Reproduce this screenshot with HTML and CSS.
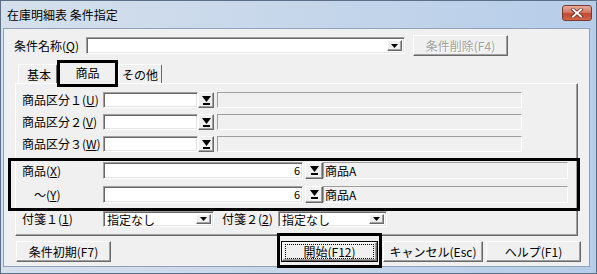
FILE: index.html
```html
<!DOCTYPE html>
<html lang="ja">
<head>
  <meta charset="UTF-8">
  <title>在庫明細表 条件指定</title>
  <link rel="stylesheet" href="styles.css">
</head>
<body>
  <div class="window">
    <div class="titlebar">
      <span class="title">在庫明細表 条件指定</span>
      <span class="close-btn">
        <svg width="14" height="10" viewBox="0 0 14 10">
          <path d="M3 1.5 L11 8.5 M11 1.5 L3 8.5" stroke="#5a2218" stroke-width="3.4" stroke-linecap="square"/>
          <path d="M3 1.5 L11 8.5 M11 1.5 L3 8.5" stroke="#fff" stroke-width="2" stroke-linecap="square"/>
        </svg>
      </span>
    </div>

    <div class="client">
      <div class="cond-row">
        <span class="lbl lbl-cond">条件名称(<u>Q</u>)</span>
        <div class="combo combo-cond">
          <span class="combo-text"></span>
          <span class="combo-arrow"><svg width="7" height="4" viewBox="0 0 7 4"><path d="M0 0h7L3.5 4z"/></svg></span>
        </div>
        <button class="btn btn-del" disabled>条件削除(F4)</button>
      </div>

      <div class="tabs">
        <div class="tab tab-basic">基本</div>
        <div class="tab tab-active">商品</div>
        <div class="tab tab-other">その他</div>
      </div>

      <div class="panel">
        <div class="row">
          <span class="lbl lbl-p">商品区分１(<u>U</u>)</span>
          <span class="field f-class"></span>
          <span class="pick"><svg width="9" height="9" viewBox="0 0 9 9"><path d="M0 0h9L4.5 6z"/><rect x="1" y="7" width="7" height="2"/></svg></span>
          <span class="static s-class"></span>
        </div>
        <div class="row">
          <span class="lbl lbl-p">商品区分２(<u>V</u>)</span>
          <span class="field f-class"></span>
          <span class="pick"><svg width="9" height="9" viewBox="0 0 9 9"><path d="M0 0h9L4.5 6z"/><rect x="1" y="7" width="7" height="2"/></svg></span>
          <span class="static s-class"></span>
        </div>
        <div class="row row-last">
          <span class="lbl lbl-p">商品区分３(<u>W</u>)</span>
          <span class="field f-class"></span>
          <span class="pick"><svg width="9" height="9" viewBox="0 0 9 9"><path d="M0 0h9L4.5 6z"/><rect x="1" y="7" width="7" height="2"/></svg></span>
          <span class="static s-class"></span>
        </div>

        <div class="row row-item">
          <span class="lbl lbl-p">商品(<u>X</u>)</span>
          <span class="field f-item">6</span>
          <span class="pick pick-item"><svg width="9" height="9" viewBox="0 0 9 9"><path d="M0 0h9L4.5 6z"/><rect x="1" y="7" width="7" height="2"/></svg></span>
          <span class="static s-item">商品A</span>
        </div>
        <div class="row row-item row-item-last">
          <span class="lbl lbl-p">　～(<u>Y</u>)</span>
          <span class="field f-item">6</span>
          <span class="pick pick-item"><svg width="9" height="9" viewBox="0 0 9 9"><path d="M0 0h9L4.5 6z"/><rect x="1" y="7" width="7" height="2"/></svg></span>
          <span class="static s-item">商品A</span>
        </div>

        <div class="row">
          <span class="lbl lbl-p">付箋１(<u>1</u>)</span>
          <div class="combo combo-tag1">
            <span class="combo-text">指定なし</span>
            <span class="combo-arrow"><svg width="7" height="4" viewBox="0 0 7 4"><path d="M0 0h7L3.5 4z"/></svg></span>
          </div>
          <span class="lbl lbl-tag2">付箋２(<u>2</u>)</span>
          <div class="combo combo-tag2">
            <span class="combo-text">指定なし</span>
            <span class="combo-arrow"><svg width="7" height="4" viewBox="0 0 7 4"><path d="M0 0h7L3.5 4z"/></svg></span>
          </div>
        </div>
      </div>

      <div class="footer">
        <button class="btn btn-init">条件初期(F7)</button>
        <div class="footer-right">
          <span class="default-frame"><button class="btn btn-start"><span class="focus">開始(F12)</span></button></span>
          <button class="btn btn-cancel">キャンセル(Esc)</button>
          <button class="btn btn-help">ヘルプ(F1)</button>
        </div>
      </div>

      <div class="mark mark-tab"></div>
      <div class="mark mark-items"></div>
      <div class="mark mark-start"></div>
    </div>
  </div>
</body>
</html>
```

FILE: styles.css
```css
* {
  box-sizing: border-box;
}

body {
  margin: 0;
  font-family: "Noto Sans CJK JP", "Liberation Sans", sans-serif;
  font-size: 12px;
  color: #000;
  background: #fff;
}

u {
  text-decoration: underline;
  text-underline-offset: 1px;
}

.window {
  width: 597px;
  height: 274px;
  display: flex;
  flex-direction: column;
  border: 1px solid #5c6f88;
  padding: 0 6px 6px 2px;
  background: linear-gradient(to right, #d6e0ec, #b6cde9);
}

.titlebar {
  height: 27px;
  display: flex;
  justify-content: space-between;
  padding-left: 4px;
}

.title {
  line-height: 27px;
  font-size: 12px;
}

.close-btn {
  width: 30px;
  height: 16px;
  margin-top: 4px;
  margin-right: -2px;
  border: 1px solid #7a3a2e;
  border-radius: 3px;
  background: linear-gradient(#eaaa9c, #d87966 45%, #c2472d 55%, #d4654a);
  display: flex;
  align-items: center;
  justify-content: center;
}

.client {
  flex: 1;
  position: relative;
  background: #f0f0f0;
  border: 1px solid #8fa2ba;
  padding: 6px 0 0 10px;
  display: flex;
  flex-direction: column;
}

/* 3D borders */
.field, .combo {
  background: #fff;
  border: 1px solid;
  border-color: #a0a0a0 #fff #fff #a0a0a0;
  box-shadow: inset 1px 1px #696969, inset -1px -1px #e3e3e3;
}

.btn, .pick, .combo-arrow {
  background: #f0f0f0;
  border: 1px solid;
  border-color: #fff #696969 #696969 #fff;
  box-shadow: inset -1px -1px #a0a0a0;
}

.static {
  border: 1px solid;
  border-color: #a0a0a0 #fff #fff #a0a0a0;
  height: 100%;
}

.btn {
  font-family: inherit;
  font-size: 12px;
  color: #000;
  padding: 0;
  height: 21px;
  line-height: 17px;
}

.btn-del {
  width: 95px;
  margin-left: 8px;
  color: #a0a0a0;
  text-shadow: 1px 1px #fff;
}

/* top condition row */
.cond-row {
  display: flex;
  align-items: center;
  height: 21px;
}

.lbl {
  white-space: nowrap;
  line-height: 16px;
}

.lbl-cond {
  width: 72px;
}

.combo {
  display: flex;
  justify-content: space-between;
  align-items: stretch;
  height: 17px;
  padding: 2px;
}

.combo-cond {
  width: 319px;
}

.combo-text {
  line-height: 11px;
  padding-left: 1px;
}

.combo-arrow {
  width: 15px;
  display: flex;
  align-items: center;
  justify-content: center;
}

/* tabs */
.tabs {
  display: flex;
  align-items: flex-end;
  height: 22px;
  margin: 5px 0 0 4px;
}

.tab {
  height: 19px;
  border: 1px solid;
  border-color: #fff #696969 transparent #fff;
  border-bottom: none;
  border-radius: 2px 2px 0 0;
  display: flex;
  align-items: center;
  justify-content: center;
  background: #f0f0f0;
}

.tab-basic {
  width: 39px;
  padding-left: 3px;
}

.tab-active {
  width: 61px;
  height: 23px;
  margin-bottom: -1px;
  position: relative;
  z-index: 1;
  padding-bottom: 2px;
}

.tab-other {
  width: 44px;
}

/* panel */
.panel {
  margin-left: 1px;
  width: 563px;
  height: 153px;
  border: 1px solid;
  border-color: #fff #696969 #696969 #fff;
  box-shadow: inset -1px -1px #a0a0a0;
  padding: 8px 0 0 6px;
}

.row {
  display: flex;
  align-items: center;
  height: 16px;
  margin-bottom: 6px;
}

.row-last {
  margin-bottom: 10px;
}

.row-item {
  height: 17px;
  margin-bottom: 7px;
}

.row-item-last {
  margin-bottom: 8px;
}

.lbl-p {
  width: 81px;
}

.f-class {
  width: 95px;
  height: 100%;
}

.pick {
  width: 16px;
  height: 100%;
  display: flex;
  align-items: center;
  justify-content: center;
}

.s-class {
  width: 305px;
  margin-left: 3px;
}

.f-item {
  width: 200px;
  height: 100%;
  text-align: right;
  padding-right: 2px;
  line-height: 15px;
  font-size: 11px;
}

.pick-item {
  width: 18px;
  margin-left: 2px;
}

.s-item {
  width: 245px;
  padding-left: 1px;
  line-height: 15px;
}

.combo-tag1 {
  width: 111px;
  height: 16px;
}

.combo-tag2 {
  width: 109px;
  height: 16px;
}

.lbl-tag2 {
  width: 56px;
  margin-left: 8px;
}

/* footer */
.footer {
  display: flex;
  align-items: center;
  height: 21px;
  margin: 5px 8px 0 2px;
}

.btn-init {
  width: 95px;
}

.footer-right {
  display: flex;
  align-items: center;
  margin-left: auto;
}

.default-frame {
  border: 1px solid #000;
  display: flex;
}

.btn-start {
  width: 95px;
  height: 19px;
  display: flex;
  align-items: center;
  justify-content: center;
}

.focus {
  width: 89px;
  height: 15px;
  line-height: 13px;
  border: 1px dotted #000;
}

.btn-cancel {
  width: 100px;
  margin-left: 5px;
}

.btn-help {
  width: 95px;
  margin-left: 3px;
}

/* black highlight frames laid over the dialog */
.mark {
  position: absolute;
  border: 3px solid #000;
  pointer-events: none;
}

.mark-tab {
  left: 53px;
  top: 31px;
  width: 61px;
  height: 27px;
  z-index: 2;
}

.mark-items {
  left: 4px;
  top: 129px;
  width: 572px;
  height: 53px;
}

.mark-start {
  left: 273px;
  top: 204px;
  width: 105px;
  height: 35px;
}
```
